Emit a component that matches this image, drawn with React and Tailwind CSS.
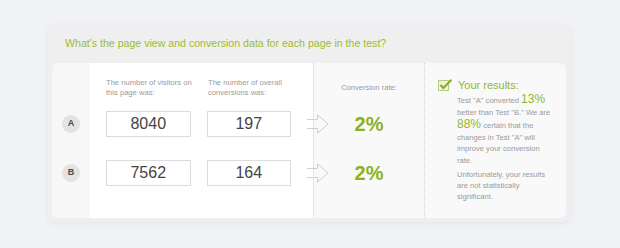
import React from "react";

const ROWS = [
  { label: "A", visitors: "8040", conversions: "197", rate: "2%" },
  { label: "B", visitors: "7562", conversions: "164", rate: "2%" },
];

const FONT = { fontFamily: '"Liberation Sans", Arial, sans-serif' };

// open-ended block arrow between the inputs and the rate column
const Arrow = () => (
  <svg width="22" height="20" viewBox="0 0 22 20" className="relative z-10 ml-[16px] -mr-[16px] shrink-0">
    <path d="M0 5.5 H10.5 V0.8 L21 10 L10.5 19.2 V14.5 H0" fill="none" stroke="#cfcfcf" strokeWidth="1" />
  </svg>
);

const CheckIcon = () => (
  <svg width="15" height="12" viewBox="0 0 15 12" className="shrink-0">
    <rect x="0.5" y="1.5" width="10" height="10" fill="#eef3df" stroke="#b9cc86" strokeWidth="1" />
    <path d="M2.5 6 L5.3 9 L13.5 0.8" fill="none" stroke="#8aab22" strokeWidth="2" />
  </svg>
);

export default function App() {
  return (
    <div className="w-[620px] h-[248px] bg-[#f1f2f6] pt-[25px] pl-[48px]" style={FONT}>
      <div className="w-[522px] h-[197px] rounded-[7px] bg-[#efefef] shadow-[0_1px_6px_rgba(0,0,0,0.06)] flex flex-col px-[4px] pb-[4px]">
        <div className="h-[38px] flex items-center pl-[13px] text-[10.6px] text-[#9dbb33]">
          What's the page view and conversion data for each page in the test?
        </div>
        <div className="flex-1 flex rounded-[6px] overflow-hidden">
          {/* row letters */}
          <div className="w-[38px] bg-[#f7f7f7] flex flex-col items-center pt-[52px] gap-[31px]">
            {ROWS.map((r) => (
              <div key={r.label} className="w-[18px] h-[18px] rounded-full bg-[#e3e3e3] flex items-center justify-center text-[9px] font-bold text-[#4a4a4a]">
                {r.label}
              </div>
            ))}
          </div>

          {/* inputs */}
          <div className="w-[223px] bg-white pl-[16px] pt-[15px]">
            <div className="flex gap-[16px] text-[7.6px] leading-[10px] text-[#9a9a9a] h-[33px]">
              <div className="w-[86px]">The number of visitors on<br />this page was:</div>
              <div className="w-[86px]">The number of overall<br />conversions was:</div>
            </div>
            <div className="flex flex-col gap-[23px]">
              {ROWS.map((r) => (
                <div key={r.label} className="flex items-center">
                  <div className="w-[86px] h-[26px] border border-[#dcdcdc] bg-white flex items-center justify-center text-[16px] text-[#444]">
                    {r.visitors}
                  </div>
                  <div className="w-[86px] h-[26px] ml-[16px] border border-[#dcdcdc] bg-white flex items-center justify-center text-[16px] text-[#444]">
                    {r.conversions}
                  </div>
                  <Arrow />
                </div>
              ))}
            </div>
          </div>

          {/* conversion rate */}
          <div className="w-[111px] bg-[#f9f9f9] border-l border-dotted border-[#d0d0d0] flex flex-col items-center pt-[20px]">
            <div className="text-[7.6px] leading-[10px] text-[#9a9a9a]">Conversion rate:</div>
            <div className="flex flex-col items-center mt-[17px] gap-[22px]">
              {ROWS.map((r) => (
                <div key={r.label} className="h-[27px] flex items-center text-[20px] font-bold text-[#8ab21c]">
                  {r.rate}
                </div>
              ))}
            </div>
          </div>

          {/* results */}
          <div className="flex-1 bg-[#f9f9f9] border-l border-dotted border-[#d0d0d0] pl-[13px] pt-[15px]">
            <div className="flex items-center gap-[5px]">
              <CheckIcon />
              <span className="text-[11px] leading-[14px] text-[#93b629]">Your results:</span>
            </div>
            <div className="pl-[19px] text-[7.6px] leading-[11.6px] text-[#9a9a9a] whitespace-nowrap mt-[1px]">
              <p>
                Test "A" converted <span className="text-[12px] leading-none text-[#93b629]">13%</span><br />
                better than Test "B." We are<br />
                <span className="text-[12px] leading-none text-[#93b629]">88%</span> certain that the<br />
                changes in Test "A" will<br />
                improve your conversion<br />
                rate.
              </p>
              <p className="mt-[2px] leading-[11px]">
                Unfortunately, your results<br />
                are not statistically<br />
                significant.
              </p>
            </div>
          </div>
        </div>
      </div>
    </div>
  );
}
